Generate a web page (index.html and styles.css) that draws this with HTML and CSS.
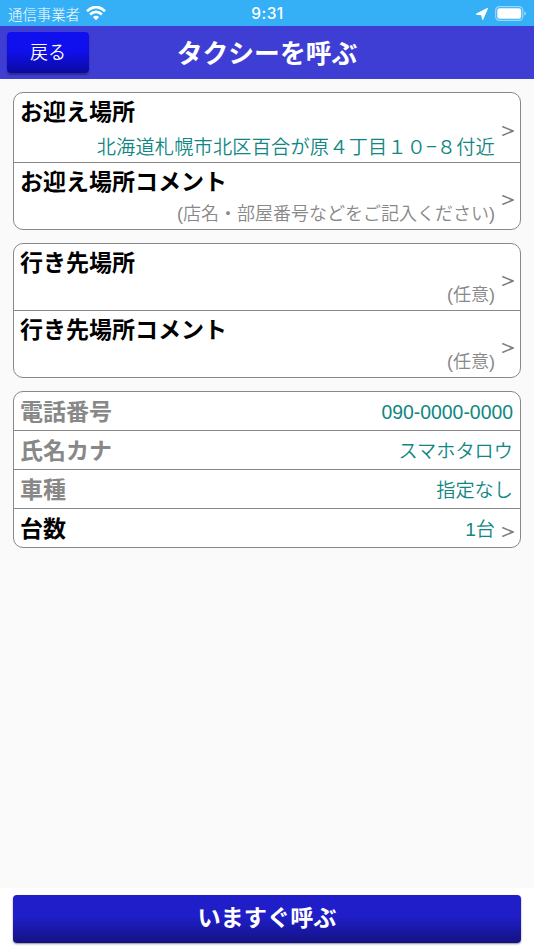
FILE: index.html
```html
<!DOCTYPE html>
<html lang="ja">
<head>
<meta charset="utf-8">
<title>タクシーを呼ぶ</title>
<link rel="stylesheet" href="styles.css">
</head>
<body>
<div class="status">
  <div class="carrier"><span>通信事業者</span>
    <svg class="wifi" width="20" height="15" viewBox="0 0 20 15"><path d="M1 5.2Q10-3.2 19 5.2M4.1 8.5Q10 3.1 15.9 8.5" fill="none" stroke="#fff" stroke-width="2.7"/><path d="M6.9 11Q10 8.3 13.1 11L10 14.2Z" fill="#fff"/></svg>
  </div>
  <div class="time">9:31</div>
  <div class="indicators">
    <svg width="12" height="12" viewBox="0 0 12 12"><path d="M11.4.6 6.7 11.3 5.7 6.7.6 6.1Z" fill="#fff" stroke="#fff" stroke-width="1.2" stroke-linejoin="round"/></svg>
    <svg width="32" height="15" viewBox="0 0 32 15"><rect x=".7" y=".7" width="27.1" height="13.6" rx="3.6" fill="none" stroke="#9bd8fb" stroke-width="1.2"/><rect x="2.3" y="2.3" width="23.9" height="10.4" rx="2.2" fill="#fff"/><path d="M29.3 5.2q1.8.6 1.8 2.3t-1.8 2.3z" fill="#9bd8fb"/></svg>
  </div>
</div>
<header class="header">
  <button class="back">戻る</button>
  <h1 class="title">タクシーを呼ぶ</h1>
</header>
<main class="content">
  <section class="card">
    <div class="row pickup">
      <div class="field"><div class="label">お迎え場所</div><div class="value address">北海道札幌市北区百合が原４丁目１０−８付近</div></div>
      <svg class="chevron" viewBox="0 0 12 12"><path d="M.3 1.5 11 6 .3 10.5"/></svg>
    </div>
    <div class="row comment">
      <div class="field"><div class="label">お迎え場所コメント</div><div class="value hint">(店名・部屋番号などをご記入ください)</div></div>
      <svg class="chevron" viewBox="0 0 12 12"><path d="M.3 1.5 11 6 .3 10.5"/></svg>
    </div>
  </section>
  <section class="card">
    <div class="row destination">
      <div class="field"><div class="label">行き先場所</div><div class="value hint">(任意)</div></div>
      <svg class="chevron" viewBox="0 0 12 12"><path d="M.3 1.5 11 6 .3 10.5"/></svg>
    </div>
    <div class="row destination">
      <div class="field"><div class="label">行き先場所コメント</div><div class="value hint">(任意)</div></div>
      <svg class="chevron" viewBox="0 0 12 12"><path d="M.3 1.5 11 6 .3 10.5"/></svg>
    </div>
  </section>
  <section class="card">
    <div class="row single"><div class="label muted">電話番号</div><div class="value phone">090-0000-0000</div></div>
    <div class="row single"><div class="label muted">氏名カナ</div><div class="value">スマホタロウ</div></div>
    <div class="row single"><div class="label muted">車種</div><div class="value">指定なし</div></div>
    <div class="row single selectable"><div class="label">台数</div><div class="value count">1台</div>
      <svg class="chevron" viewBox="0 0 12 12"><path d="M.3 1.5 11 6 .3 10.5"/></svg></div>
  </section>
</main>
<footer class="footer"><button class="call">いますぐ呼ぶ</button></footer>
</body>
</html>
```
FILE: styles.css
```css
* { box-sizing: border-box; }
body {
  margin: 0;
  height: 950px;
  display: flex;
  flex-direction: column;
  overflow: hidden;
  background: #fafafa;
  font-family: "Liberation Sans", "Noto Sans CJK JP", sans-serif;
}
.status {
  height: 26px;
  display: grid;
  grid-template-columns: 1fr auto 1fr;
  align-items: center;
  padding: 0 7px 0 8px;
  background: #35aff5;
  color: #fff;
}
.carrier { display: flex; align-items: center; gap: 6px; font: 300 14.4px/26px "Noto Sans CJK JP", sans-serif; }
.wifi { margin-top: -1px; }
.time { font: 500 15.5px/26px Inter, sans-serif; letter-spacing: .5px; padding-top: 1px; }
.indicators { display: flex; justify-content: flex-end; align-items: center; gap: 7px; }
.header {
  height: 53px;
  flex: none;
  display: grid;
  grid-template-columns: 82px 1fr 82px;
  padding: 6px 7px 0;
  background: #3f3ed4;
}
.back, .call { border: 0; padding: 0; color: #fff; font-family: "Noto Sans CJK JP", sans-serif; }
.back {
  height: 41px;
  padding-bottom: 2px;
  border-radius: 4px;
  background: linear-gradient(#1010ee 0, #1010ee 45%, #0a0aa0 100%);
  box-shadow: 0 2px 2px rgba(30, 30, 90, .6);
  font-size: 18px;
  font-weight: 350;
  line-height: 39px;
}
.title { margin: 0; text-align: center; color: #fff; font: 700 25.8px/40px "Noto Sans CJK JP", sans-serif; }
.content { flex: 1; display: flex; flex-direction: column; gap: 13px; padding: 13px; }
.card { border: 1px solid #888; border-radius: 10px; background: #fff; }
.row { display: flex; align-items: center; padding: 0 6px; }
.row + .row { border-top: 1px solid #888; }
.pickup { height: 69px; }
.comment { height: 67px; }
.destination { height: 66px; }
.destination + .destination { height: 67px; }
.field { flex: 1; height: 100%; display: flex; flex-direction: column; justify-content: space-between; }
.label { font: 700 23px/34px "Noto Sans CJK JP", sans-serif; color: #000; white-space: nowrap; }
.muted { color: #888; }
.value { color: #108783; font-size: 19.2px; font-weight: 350; line-height: 32px; text-align: right; white-space: nowrap; }
.address { font-family: "Noto Sans CJK JP", sans-serif; line-height: 32px; letter-spacing: .19px; }
.hint { color: #888; font-size: 18px; line-height: 29px; }
.phone { font-size: 19.4px; }
.chevron { width: 12px; height: 12px; flex: none; margin: 7px 0 0 7px; fill: none; stroke: #7c7c7c; stroke-width: 1.5; }
.selectable .chevron { margin-top: 8px; }
.single { height: 39px; padding-right: 7px; }
.selectable { padding-right: 6px; }
.single:first-child { height: 38px; }
.single .label { flex: 1; padding-bottom: 3px; }
.single .value { padding-top: 3px; }
.single .phone { padding-top: 2px; }
.footer { height: 62px; flex: none; padding: 7px 13px; background: #fff; }
.call {
  display: block;
  width: 100%;
  height: 48px;
  padding-bottom: 7px;
  border-radius: 4px;
  background: linear-gradient(#1f1ec8 0, #1f1ec8 45%, #131283 100%);
  box-shadow: 0 1px 2px rgba(0, 0, 0, .45);
  font-size: 23.2px;
  font-weight: 700;
  line-height: 40px;
}
```
